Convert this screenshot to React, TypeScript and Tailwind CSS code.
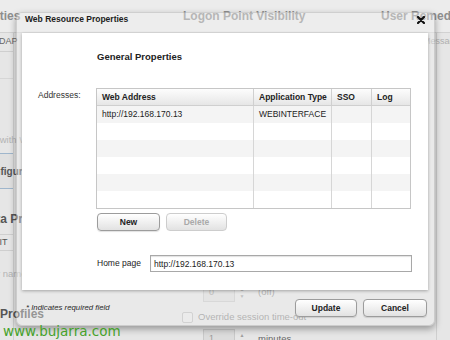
import React from "react";

const rows = [
  { addr: "http://192.168.170.13", type: "WEBINTERFACE" },
  { addr: "", type: "" },
  { addr: "", type: "" },
  { addr: "", type: "" },
  { addr: "", type: "" },
  { addr: "", type: "" },
];

const cols = "grid grid-cols-[157px_78px_40px_1fr]";

function Spinner({ value }: { value: string }) {
  return (
    <div className="flex items-stretch h-[19px]">
      <div className="w-[32px] border border-[#c9c9c9] bg-[#dcdcdc] text-[9px] text-[#9a9a9a] flex items-center pl-[5px]">
        {value}
      </div>
      <div className="w-[14px] flex flex-col items-center justify-center text-[5px] leading-[7px] text-[#a0a0a0]">
        <span>▲</span>
        <span>▼</span>
      </div>
    </div>
  );
}

export default function App() {
  const btn =
    "h-[18px] rounded-[4px] border border-[#9c9c9c] bg-linear-to-b from-white to-[#e2e2e2] text-[8.5px] font-bold text-[#222] flex items-center justify-center shadow-[0_1px_1px_rgba(0,0,0,0.12)]";

  return (
    <div className="relative w-[450px] h-[340px] overflow-hidden bg-[#e6e6e6] [font-family:'Liberation_Sans',Arial,sans-serif]">
      {/* background page */}
      <div className="flex flex-col h-full">
        <div className="h-[33px] shrink-0 flex items-center whitespace-nowrap text-[12px] font-bold text-[#8e8e8e] bg-[#ececec] border-b border-[#d2d2d2]">
          <span className="-ml-[39px] w-[222px] shrink-0">Properties</span>
          <span className="w-[198px] shrink-0">Logon Point Visibility</span>
          <span className="shrink-0">User Remediation</span>
        </div>
        <div className="flex flex-1">
          {/* left column */}
          <div className="w-[14px] shrink-0 flex flex-col border-r border-[#cfcfcf] whitespace-nowrap">
            <div className="h-[19px] flex items-center border-b border-[#cfcfcf] text-[9px] text-[#666]">
              <span className="-ml-[6px]">LDAP</span>
            </div>
            <div className="h-[27px] border-b border-[#d6d6d6]" />
            <div className="h-[67px] flex items-end text-[9.5px] leading-[12px] text-[#b4b4b4]">
              <span className="-ml-[32px]">Sign in with Windows</span>
            </div>
            <div className="h-[36px] mt-[7px] flex items-center border-y border-[#9fb6cc] bg-[#e0e0e0] text-[10px] font-bold text-[#555]">
              <span className="-ml-[19px]">Configuration</span>
            </div>
            <div className="h-[45px] flex items-end pb-[6px] text-[12px] font-bold text-[#555]">
              <span className="-ml-[19px]">Data Protection</span>
            </div>
            <div className="h-[17px] flex items-center border-y border-[#cfcfcf] text-[9px] text-[#555]">
              <span className="-ml-[13px]">EDIT</span>
            </div>
            <div className="h-[30px] flex items-end text-[9.5px] text-[#b4b4b4]">
              <span className="-ml-[20px]">User name</span>
            </div>
            <div className="mt-[24px] text-[12px] font-bold text-[#555]">
              <span>Profiles</span>
            </div>
          </div>
          {/* middle */}
          <div className="flex-1 flex flex-col">
            <div className="mt-[250px] ml-[189px] flex items-center gap-[9px]">
              <Spinner value="0" />
              <span className="text-[9.5px] text-[#8a8a8a]">(off)</span>
            </div>
            <div className="mt-[8px] ml-[168px] flex items-center gap-[5px] whitespace-nowrap">
              <div className="w-[11px] h-[11px] border border-[#bdbdbd] bg-[#e8e8e8] rounded-[2px]" />
              <span className="text-[9.5px] text-[#8a8a8a]">Override session time-out</span>
            </div>
            <div className="mt-[5px] ml-[189px] flex items-center gap-[9px]">
              <Spinner value="1" />
              <span className="text-[9.5px] text-[#666]">minutes</span>
            </div>
          </div>
          {/* right column */}
          <div className="w-[14px] shrink-0 border-l border-[#cfcfcf] whitespace-nowrap">
            <div className="mt-[2px] text-[9px] text-[#b0b0b0]">
              <span className="-ml-[14px]">Message</span>
            </div>
          </div>
        </div>
      </div>

      {/* dialog */}
      <div className="absolute left-[16px] top-[12px] w-[419px] h-[314px] rounded-[6px] bg-[rgba(238,238,238,0.42)] border border-[rgba(0,0,0,0.12)] shadow-[0_3px_7px_rgba(0,0,0,0.35)] flex flex-col">
        <div className="h-[20px] pt-[1px] pl-[8px] text-[8.5px] leading-[10px] font-bold text-[#1c1c1c]">
          Web Resource Properties
        </div>
        <div className="ml-[5px] w-[406px] h-[257px] bg-white shadow-[0_1px_3px_rgba(0,0,0,0.3)] flex flex-col">
          <div className="pt-[18px] pl-[75px] text-[9.5px] leading-[11px] font-bold text-[#222]">
            General Properties
          </div>
          <div className="mt-[26px] flex">
            <div className="w-[74px] pl-[16px] pt-[2px] text-[8.5px] leading-[10px] text-[#333]">
              Addresses:
            </div>
            <div className="w-[315px] border border-[#c6c6c6]">
              <div className={`${cols} h-[17px] bg-linear-to-b from-[#fdfdfd] to-[#e6e6e6] border-b border-[#cfcfcf] text-[8.5px] font-bold text-[#222]`}>
                {["Web Address", "Application Type", "SSO", "Log"].map((h, i) => (
                  <div
                    key={h}
                    className={`flex items-center pl-[5px] ${i < 3 ? "border-r border-[#d0d0d0]" : ""}`}
                  >
                    {h}
                  </div>
                ))}
              </div>
              {rows.map((r, ri) => (
                <div
                  key={ri}
                  className={`${cols} h-[17px] text-[8.5px] text-[#222] ${ri % 2 === 0 ? "bg-[#f4f4f4]" : "bg-white"}`}
                >
                  <div className="flex items-center pl-[5px] border-r border-[#d6d6d6]">{r.addr}</div>
                  <div className="flex items-center pl-[5px] border-r border-[#d6d6d6]">{r.type}</div>
                  <div className="border-r border-[#d6d6d6]" />
                  <div />
                </div>
              ))}
            </div>
          </div>
          <div className="mt-[4px] pl-[75px] flex gap-[6px]">
            <button className={`${btn} w-[63px]`}>New</button>
            <button className={`${btn} w-[61px] border-[#cdcdcd] text-[#a9a9a9] shadow-none`}>Delete</button>
          </div>
          <div className="mt-[24px] pl-[75px] flex items-center">
            <span className="w-[53px] text-[8.5px] text-[#222]">Home page</span>
            <input
              readOnly
              value="http://192.168.170.13"
              className="w-[262px] h-[17px] border border-[#a8a8a8] bg-white pl-[3px] text-[8.5px] text-[#222] outline-none shadow-[inset_0_1px_1px_rgba(0,0,0,0.12)] [font-family:'Liberation_Sans',Arial,sans-serif]"
            />
          </div>
        </div>
        <div className="pt-[9px] pl-[9px] pr-[7px] flex items-center">
          <span className="text-[7.8px] italic text-[#2a2a2a]">* Indicates required field</span>
          <div className="ml-auto flex gap-[6px]">
            <button className={`${btn} w-[62px] border-[#4f7196] shadow-[0_0_0_2px_rgba(140,190,240,0.75)]`}>Update</button>
            <button className={`${btn} w-[64px]`}>Cancel</button>
          </div>
        </div>
        <div className="absolute left-[400px] top-[3px] w-[8px] h-[8px]">
          <svg viewBox="0 0 8 8" width="8" height="8">
            <path d="M1 1 L7 7 M7 1 L1 7" stroke="#111" strokeWidth="2.2" strokeLinecap="round" />
          </svg>
        </div>
      </div>

      <div className="absolute left-[3px] top-[323px] text-[13.5px] leading-[16px] text-[#45a12a] [font-family:'DejaVu_Sans',sans-serif]">
        www.bujarra.com
      </div>
    </div>
  );
}
